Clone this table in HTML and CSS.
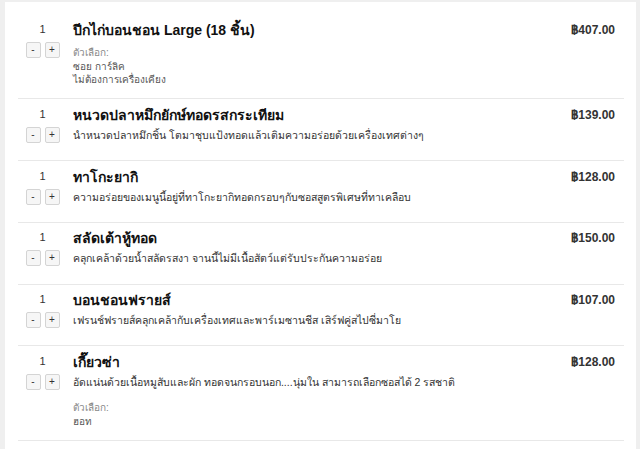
FILE: index.html
```html
<!DOCTYPE html>
<html lang="th">
<head>
<meta charset="utf-8">
<link rel="stylesheet" href="styles.css">
</head>
<body>
<div class="panel">
  <div class="row row-first">
    <div class="qty">
      <div class="num">1</div>
      <div class="btns"><span class="btn">-</span><span class="btn">+</span></div>
    </div>
    <div class="info">
      <div class="title">ปีกไก่บอนชอน Large (18 ชิ้น)</div>
      <div class="opts opts-only">
        <div class="opt-label">ตัวเลือก:</div>
        <div class="opt">ซอย การ์ลิค</div>
        <div class="opt">ไม่ต้องการเครื่องเคียง</div>
      </div>
    </div>
    <div class="price">฿407.00</div>
  </div>
  <div class="row">
    <div class="qty">
      <div class="num">1</div>
      <div class="btns"><span class="btn">-</span><span class="btn">+</span></div>
    </div>
    <div class="info">
      <div class="title">หนวดปลาหมึกยักษ์ทอดรสกระเทียม</div>
      <div class="desc">นำหนวดปลาหมึกชิ้น โตมาชุบแป้งทอดแล้วเติมความอร่อยด้วยเครื่องเทศต่างๆ</div>
    </div>
    <div class="price">฿139.00</div>
  </div>
  <div class="row">
    <div class="qty">
      <div class="num">1</div>
      <div class="btns"><span class="btn">-</span><span class="btn">+</span></div>
    </div>
    <div class="info">
      <div class="title">ทาโกะยากิ</div>
      <div class="desc">ความอร่อยของเมนูนี้อยู่ที่ทาโกะยากิทอดกรอบๆกับซอสสูตรพิเศษที่ทาเคลือบ</div>
    </div>
    <div class="price">฿128.00</div>
  </div>
  <div class="row">
    <div class="qty">
      <div class="num">1</div>
      <div class="btns"><span class="btn">-</span><span class="btn">+</span></div>
    </div>
    <div class="info">
      <div class="title">สลัดเต้าหู้ทอด</div>
      <div class="desc">คลุกเคล้าด้วยน้ำสลัดรสงา จานนี้ไม่มีเนื้อสัตว์แต่รับประกันความอร่อย</div>
    </div>
    <div class="price">฿150.00</div>
  </div>
  <div class="row">
    <div class="qty">
      <div class="num">1</div>
      <div class="btns"><span class="btn">-</span><span class="btn">+</span></div>
    </div>
    <div class="info">
      <div class="title">บอนชอนฟรายส์</div>
      <div class="desc">เฟรนช์ฟรายส์คลุกเคล้ากับเครื่องเทศและพาร์เมซานชีส เสิร์ฟคู่สไปซี่มาโย</div>
    </div>
    <div class="price">฿107.00</div>
  </div>
  <div class="row">
    <div class="qty">
      <div class="num">1</div>
      <div class="btns"><span class="btn">-</span><span class="btn">+</span></div>
    </div>
    <div class="info">
      <div class="title">เกี๊ยวซ่า</div>
      <div class="desc">อัดแน่นด้วยเนื้อหมูสับและผัก ทอดจนกรอบนอก....นุ่มใน สามารถเลือกซอสได้ 2 รสชาติ</div>
      <div class="opts opts-after">
        <div class="opt-label">ตัวเลือก:</div>
        <div class="opt">ฮอท</div>
      </div>
    </div>
    <div class="price">฿128.00</div>
  </div>
</div>
</body>
</html>
```

FILE: styles.css
```css
html, body {
  margin: 0;
  padding: 0;
  background: #efefef;
  font-family: "Liberation Sans", "Noto Sans", sans-serif;
  color: #222;
  overflow: hidden;
}
.panel {
  margin: 2px 4px 0 5px;
  background: #fff;
  padding: 14px 12px 0 13px;
  height: 447px;
  box-sizing: border-box;
}
.row {
  display: flex;
  align-items: flex-start;
  padding: 5.5px 9px 17.25px 0;
  border-bottom: 1px solid #e8e8e8;
}
.row-first {
  padding-top: 4px;
}
.qty {
  width: 49px;
  margin-right: 6px;
  flex: none;
  display: flex;
  flex-direction: column;
  align-items: center;
}
.num {
  font-size: 11px;
  line-height: 14px;
  color: #333;
  margin-top: 2px;
}
.btns {
  display: flex;
  gap: 4px;
  margin-top: 6px;
}
.btn {
  width: 13px;
  height: 14px;
  border: 1px solid #d4d4d4;
  border-radius: 2px;
  background: #f6f6f6;
  font-size: 10px;
  line-height: 14px;
  text-align: center;
  color: #333;
}
.info {
  flex: 1;
  min-width: 0;
}
.title {
  font-size: 14px;
  font-weight: bold;
  line-height: 20px;
  color: #111;
}
.desc {
  font-size: 10.5px;
  line-height: 16px;
  color: #333;
  margin-top: 2px;
}
.opts {
  font-size: 10px;
  line-height: 13.5px;
  color: #555;
}
.opts-only {
  margin-top: 6px;
  margin-bottom: -5.5px;
}
.opts-after {
  margin-top: 11px;
  margin-bottom: -6.5px;
  line-height: 14px;
}
.opt-label {
  color: #888;
}
.price {
  flex: none;
  font-size: 12px;
  font-weight: bold;
  line-height: 20px;
  color: #333;
}
```
